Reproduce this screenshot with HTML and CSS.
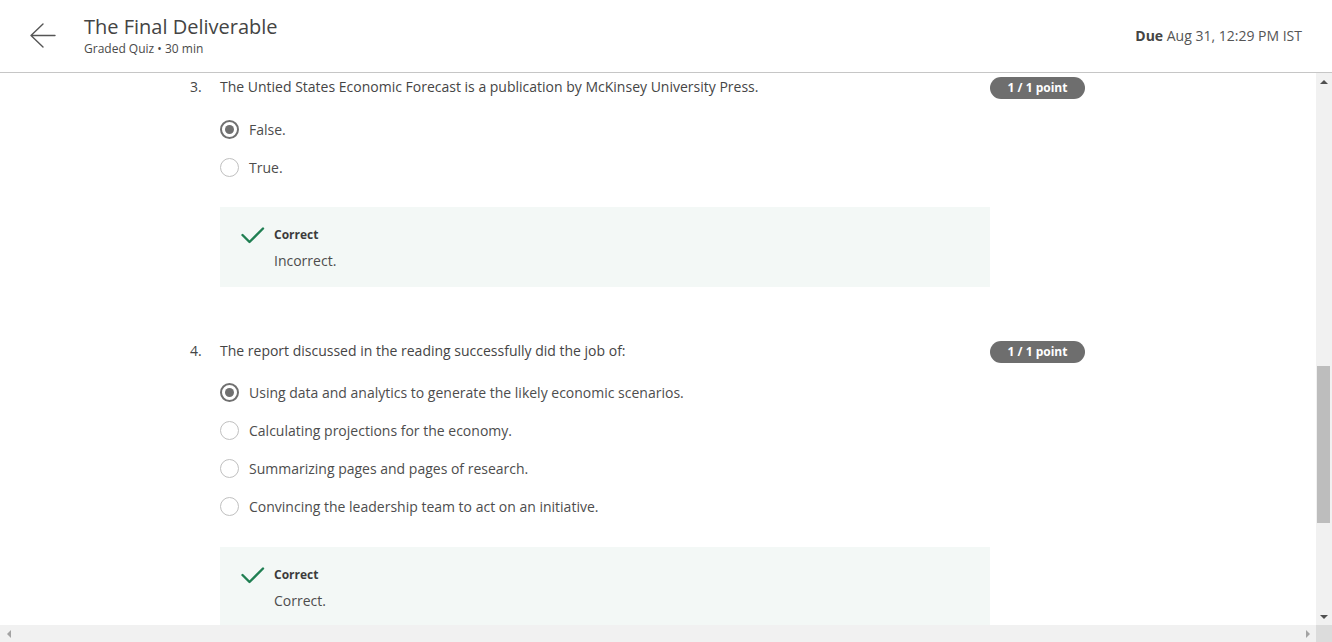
FILE: index.html
```html
<!DOCTYPE html>
<html lang="en">
<head>
<meta charset="utf-8">
<title>The Final Deliverable</title>
<link rel="stylesheet" href="styles.css">
</head>
<body>
<header class="header">
  <div class="back">
    <svg width="28" height="28" viewBox="0 0 28 28" fill="none" stroke="#555" stroke-width="1.4" stroke-linecap="round" stroke-linejoin="round">
      <path d="M2 14.5 H26 M14 3 L2 14.5 L14 26"/>
    </svg>
  </div>
  <div class="titles">
    <div class="title">The Final Deliverable</div>
    <div class="subtitle">Graded Quiz • 30 min</div>
  </div>
  <div class="due"><b>Due</b> Aug 31, 12:29 PM IST</div>
</header>
<div class="main">
  <div class="content">
    <section class="q">
      <div class="qnum">3.</div>
      <div class="qbody">
        <div class="qtext">The Untied States Economic Forecast is a publication by McKinsey University Press.</div>
        <div class="options">
          <div class="opt"><span class="radio sel"></span><span>False.</span></div>
          <div class="opt"><span class="radio"></span><span>True.</span></div>
        </div>
        <div class="feedback">
          <svg class="check" width="24" height="18" viewBox="0 0 24 18" fill="none" stroke="#1f7f52" stroke-width="2.4" stroke-linecap="round" stroke-linejoin="round"><path d="M1.5 8 L8.5 15 L22 1.5"/></svg>
          <div class="fbtext">
            <div class="fbtitle">Correct</div>
            <div class="fbmsg">Incorrect.</div>
          </div>
        </div>
      </div>
      <div class="badge">1 / 1 point</div>
    </section>
    <section class="q q4">
      <div class="qnum">4.</div>
      <div class="qbody">
        <div class="qtext">The report discussed in the reading successfully did the job of:</div>
        <div class="options">
          <div class="opt"><span class="radio sel"></span><span>Using data and analytics to generate the likely economic scenarios.</span></div>
          <div class="opt"><span class="radio"></span><span>Calculating projections for the economy.</span></div>
          <div class="opt"><span class="radio"></span><span>Summarizing pages and pages of research.</span></div>
          <div class="opt"><span class="radio"></span><span>Convincing the leadership team to act on an initiative.</span></div>
        </div>
        <div class="feedback">
          <svg class="check" width="24" height="18" viewBox="0 0 24 18" fill="none" stroke="#1f7f52" stroke-width="2.4" stroke-linecap="round" stroke-linejoin="round"><path d="M1.5 8 L8.5 15 L22 1.5"/></svg>
          <div class="fbtext">
            <div class="fbtitle">Correct</div>
            <div class="fbmsg">Correct.</div>
          </div>
        </div>
      </div>
      <div class="badge">1 / 1 point</div>
    </section>
  </div>
  <div class="vscroll">
    <div class="sbtn"><span class="tri up"></span></div>
    <div class="vtrack"><div class="vthumb"></div></div>
    <div class="sbtn"><span class="tri down"></span></div>
  </div>
</div>
<div class="hbar">
  <div class="htrack">
    <div class="hbtn"><span class="tri left"></span></div>
    <div class="hspace"></div>
    <div class="hbtn"><span class="tri right"></span></div>
  </div>
  <div class="corner"></div>
</div>
</body>
</html>
```
FILE: styles.css
```css
* { box-sizing: border-box; }
html, body { margin: 0; padding: 0; }
body {
  width: 1332px;
  height: 642px;
  overflow: hidden;
  background: #fff;
  font-family: "Open Sans", "Noto Sans", sans-serif;
  color: #444;
}
.header {
  height: 73px;
  border-bottom: 1px solid #c6c6c6;
  display: flex;
  align-items: flex-start;
}
.back {
  width: 84px;
  padding: 21px 0 0 29px;
}
.back svg { display: block; }
.titles {
  flex: 1;
  padding-top: 14px;
}
.title {
  font-size: 20px;
  line-height: 26px;
  color: #444;
}
.subtitle {
  margin-top: 1px;
  font-size: 12px;
  line-height: 16px;
  color: #4a4a4a;
}
.due {
  padding: 26px 30px 0 0;
  font-size: 14px;
  line-height: 20px;
  color: #555;
}
.due b { color: #444; font-weight: 700; }

.main {
  display: flex;
  height: 552px;
}
.content {
  flex: 1;
  overflow: hidden;
  padding-top: 4px;
}
.q {
  display: grid;
  grid-template-columns: 30px 770px 95px;
  padding-left: 190px;
  align-items: start;
}
.q4 { margin-top: 54px; }
.qnum, .qtext {
  font-size: 14px;
  line-height: 20px;
  color: #454545;
}
.options { margin-top: 13px; }
.q4 .options { margin-top: 12px; }
.opt {
  height: 38px;
  display: flex;
  align-items: center;
  font-size: 14px;
  color: #4d4d4d;
}
.radio {
  width: 19px;
  height: 19px;
  border-radius: 50%;
  border: 1.5px solid #c0c0c0;
  margin-right: 10px;
  display: flex;
  align-items: center;
  justify-content: center;
}
.radio.sel { border: 2px solid #707070; }
.radio.sel::after {
  content: "";
  width: 9px;
  height: 9px;
  border-radius: 50%;
  background: #707070;
}
.feedback {
  margin-top: 21px;
  background: #f3f8f6;
  height: 80px;
  padding: 18px 20px 0 21px;
  display: flex;
  align-items: flex-start;
}
.q4 .feedback { margin-top: 22px; }
.check { margin-top: 2px; margin-right: 9px; display: block; }
.fbtitle {
  font-size: 12px;
  font-weight: 700;
  line-height: 20px;
  color: #3c3c3c;
}
.fbmsg {
  margin-top: 6px;
  font-size: 14px;
  line-height: 20px;
  color: #4d4d4d;
}
.badge {
  height: 22px;
  border-radius: 11px;
  background: #6e6e6e;
  color: #fff;
  font-size: 12px;
  font-weight: 700;
  line-height: 22px;
  text-align: center;
}

.vscroll {
  width: 16px;
  background: #f1f1f1;
  display: flex;
  flex-direction: column;
}
.sbtn {
  height: 17px;
  display: flex;
  align-items: center;
  justify-content: center;
}
.vtrack { flex: 1; }
.vthumb {
  margin: 276px 2px 0 1px;
  height: 157px;
  background: #bdbdbd;
}
.hbar {
  height: 17px;
  display: flex;
}
.htrack {
  flex: 1;
  background: #f1f1f1;
  display: flex;
}
.hbtn {
  width: 17px;
  display: flex;
  align-items: center;
  justify-content: center;
}
.hspace { flex: 1; }
.corner { width: 16px; background: #dcdcdc; }
.tri { width: 0; height: 0; }
.tri.up { border-left: 4px solid transparent; border-right: 4px solid transparent; border-bottom: 4px solid #505050; }
.tri.down { border-left: 4px solid transparent; border-right: 4px solid transparent; border-top: 4px solid #505050; }
.tri.left { border-top: 4px solid transparent; border-bottom: 4px solid transparent; border-right: 4px solid #a3a3a3; }
.tri.right { border-top: 4px solid transparent; border-bottom: 4px solid transparent; border-left: 4px solid #a3a3a3; }
```
